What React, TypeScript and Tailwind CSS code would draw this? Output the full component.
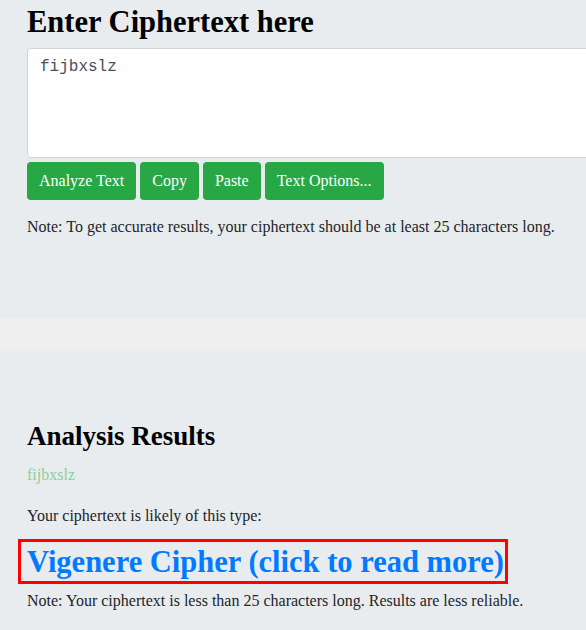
export default function App() {
  const serif = "font-['Liberation_Serif','Times_New_Roman',serif]"
  return (
    <div className={`min-h-screen w-full overflow-hidden bg-[#e9ecef] text-[#212529] ${serif}`}>
      {/* input section */}
      <section className="pl-[27px] pt-[4px] h-[318px]">
        <h2 className="text-[30.5px] leading-[36px] font-bold text-black">Enter Ciphertext here</h2>
        <textarea
          className="mt-[8px] block w-[620px] h-[110px] rounded-[4px] border border-[#ced4da] bg-white px-[12px] py-[6px] font-['Liberation_Mono','DejaVu_Sans_Mono',monospace] text-[16px] leading-[24px] text-[#495057] resize-none outline-none"
          defaultValue="fijbxslz"
        />
        <div className="mt-[4px] flex gap-[4px]">
          {['Analyze Text', 'Copy', 'Paste', 'Text Options...'].map((label) => (
            <button
              key={label}
              className="h-[38px] rounded-[4px] bg-[#28a745] px-[12px] text-[16px] leading-[24px] text-white"
            >
              {label}
            </button>
          ))}
        </div>
        <p className="mt-[15px] text-[16px] leading-[24px]">
          Note: To get accurate results, your ciphertext should be at least 25 characters long.
        </p>
      </section>

      <div className="h-[33px] bg-[#efefef]" />

      {/* results section */}
      <section className="pl-[27px] pt-[67px] pb-10">
        <h2 className="text-[27px] leading-[36px] font-bold text-black">Analysis Results</h2>
        <p className="mt-[9px] text-[16px] leading-[24px] text-[#8ccf9a]">fijbxslz</p>
        <p className="mt-[17px] text-[16px] leading-[24px]">Your ciphertext is likely of this type:</p>
        <div className="mt-[11px] -ml-[9px] w-[490px] border-[3px] border-[#ff0000] pl-[6px] pr-[1px] pt-[2px]">
          <a href="#" className="block whitespace-nowrap text-[30.5px] leading-[37px] font-bold text-[#007bff]">
            Vigenere Cipher (click to read more)
          </a>
        </div>
        <p className="mt-[5px] text-[16px] leading-[24px]">
          Note: Your ciphertext is less than 25 characters long. Results are less reliable.
        </p>
      </section>
    </div>
  )
}
